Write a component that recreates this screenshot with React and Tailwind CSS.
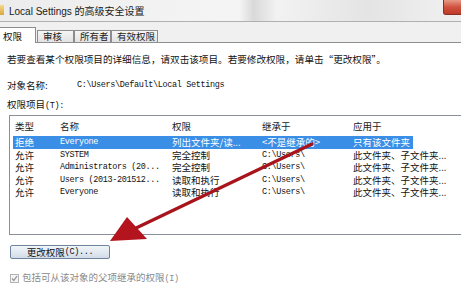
import React from "react";

const rows = [
  { type: "拒绝", name: "Everyone", perm: "列出文件夹/读...", from: "<不是继承的>", apply: "只有该文件夹", selected: true },
  { type: "允许", name: "SYSTEM", perm: "完全控制", from: "C:\\Users\\", apply: "此文件夹、子文件夹..." },
  { type: "允许", name: "Administrators (20...", perm: "完全控制", from: "C:\\Users\\", apply: "此文件夹、子文件夹..." },
  { type: "允许", name: "Users (2013-201512...", perm: "读取和执行", from: "C:\\Users\\", apply: "此文件夹、子文件夹..." },
  { type: "允许", name: "Everyone", perm: "读取和执行", from: "C:\\Users\\", apply: "此文件夹、子文件夹..." },
];

const mono = "font-['Liberation_Mono','Noto_Sans_CJK_SC',monospace] text-[8.5px] tracking-[-0.35px]";

function Tab({ label, selected, width }) {
  if (selected) {
    return (
      <div className={`${width} h-[16px] -mb-px relative bg-white border-t border-r border-[#8c8c8c] pl-[3px] pt-[2px] leading-[12px]`}>
        {label}
      </div>
    );
  }
  return (
    <div className={`${width} h-[12px] border-t border-r border-l border-[#8c8c8c] bg-[linear-gradient(#f6f6f6,#e2e2e2)] pl-[5px] leading-[11px] text-[#222]`}>
      {label}
    </div>
  );
}

export default function App() {
  return (
    <div className="relative w-[461px] h-[284px] overflow-hidden bg-white font-['Noto_Sans_CJK_SC','Liberation_Sans',sans-serif] text-[9.5px] text-[#111]">
      {/* title bar */}
      <div className="h-[22px] flex items-start border-b border-[#b0b0b0] bg-[linear-gradient(90deg,#ececec_0%,#f3f3f3_40%,#f4f4f4_52%,#d9d9d9_55%,#f2f2f2_60%,#e4e4e4_80%,#eeeeee_95%)]">
        <div className="w-[4px] h-[10px] mt-[5px] bg-[linear-gradient(#f3d98a,#d9a93c)]" />
        <div className="ml-[5px] mt-[5px] leading-[13px] font-['Liberation_Sans','Noto_Sans_CJK_SC',sans-serif] text-[10px] text-[#1a1a1a]">
          Local Settings 的高级安全设置
        </div>
        <div className="ml-auto w-[18px] h-[15px] rounded-bl-[3px] border-l border-b border-[#8d2e22] bg-[linear-gradient(#e79a86,#d0533f_50%,#c0392b)]" />
      </div>

      {/* tabs */}
      <div className="h-[21px] flex items-end bg-[#f0f0f0] border-b border-[#8e8e8e]">
        <Tab label="权限" selected width="w-[36px]" />
        <div className="w-[1px]" />
        <Tab label="审核" width="w-[37px]" />
        <Tab label="所有者" width="w-[37px]" />
        <Tab label="有效权限" width="w-[47px]" />
      </div>

      {/* page */}
      <div className="pl-[7px]">
        <div className="pt-[10px] leading-[12px] text-[9.6px] whitespace-nowrap">
          若要查看某个权限项目的详细信息，请双击该项目。若要修改权限，请单击“更改权限”。
        </div>
        <div className="mt-[14px] flex items-center leading-[12px]">
          <span className="w-[70px]">对象名称:</span>
          <span className={mono}>C:\Users\Default\Local Settings</span>
        </div>
        <div className="mt-[7px] leading-[12px]">
          权限项目<span className={mono}>(T):</span>
        </div>

        {/* list */}
        <div className="mt-[3px] ml-[2px] w-[470px] h-[120px] border border-[#8a8f99]">
          <div className="h-[20px] flex items-center pl-[3px] text-[#222]">
            <div className="w-[45px] shrink-0 pl-[2px]">类型</div>
            <div className="w-[112px] shrink-0 pl-[2px]">名称</div>
            <div className="w-[90px] shrink-0 pl-[2px]">权限</div>
            <div className="w-[91px] shrink-0 pl-[2px]">继承于</div>
            <div className="w-[100px] shrink-0 pl-[2px]">应用于</div>
          </div>
          {rows.map((r, i) => (
            <div
              key={i}
              className={`ml-[3px] h-[12.5px] flex items-center overflow-hidden leading-[12px] whitespace-nowrap ${
                r.selected ? "w-[400px] bg-[#3b8ee6] text-white" : "text-[#111]"
              }`}
            >
              <div className="w-[45px] shrink-0 pl-[2px]">{r.type}</div>
              <div className={`w-[112px] shrink-0 pl-[2px] overflow-hidden ${mono}`}>{r.name}</div>
              <div className="w-[90px] shrink-0 pl-[2px] overflow-hidden">{r.perm}</div>
              <div className={`w-[91px] shrink-0 pl-[2px] overflow-hidden ${r.selected ? "" : mono}`}>{r.from}</div>
              <div className="w-[100px] shrink-0 pl-[2px] overflow-hidden">{r.apply}</div>
            </div>
          ))}
        </div>

        <button className="mt-[10px] ml-[3px] w-[100px] h-[14px] flex items-center justify-center rounded-[2px] border border-[#6f849d] bg-[linear-gradient(#f1f5f9,#e2e9f1_50%,#d2dce7)] leading-[12px] text-[#111]">
          更改权限<span className={mono}>(C)...</span>
        </button>

        <div className="mt-[12px] ml-[3px] flex items-center leading-[12px] text-[#8a8a8a]">
          <div className="w-[9px] h-[9px] border border-[#b4b4b4] bg-[#f4f4f4] flex items-center justify-center">
            <svg width="7" height="7" viewBox="0 0 7 7">
              <polyline points="1,3.5 2.8,5.5 6,1.2" fill="none" stroke="#9a9a9a" strokeWidth="1.3" />
            </svg>
          </div>
          <span className="ml-[3px]">
            包括可从该对象的父项继承的权限<span className={mono}>(I)</span>
          </span>
        </div>
      </div>

      {/* red annotation arrow */}
      <svg className="absolute inset-0 pointer-events-none" width="461" height="284" viewBox="0 0 461 284">
        <line x1="312" y1="144" x2="134" y2="229" stroke="#a8141c" strokeWidth="3.2" strokeLinecap="round" />
        <polygon points="110,241 127,217 147,239" fill="#b3141d" />
      </svg>
    </div>
  );
}
